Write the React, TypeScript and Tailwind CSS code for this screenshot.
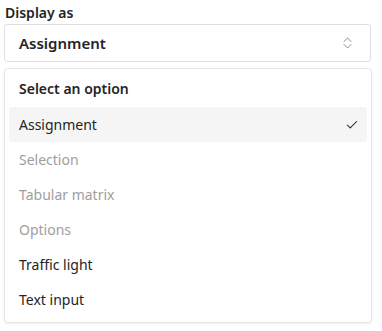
import { Check } from "lucide-react";

const options = [
  { label: "Assignment", selected: true },
  { label: "Selection", disabled: true },
  { label: "Tabular matrix", disabled: true },
  { label: "Options", disabled: true },
  { label: "Traffic light" },
  { label: "Text input" },
];

export default function App() {
  return (
    <div
      className="w-[382px] h-[331px] bg-white text-[#242424]"
      style={{ fontFamily: '"Segoe UI", "Noto Sans", sans-serif' }}
    >
      <div className="pl-[5px] pt-[3px] text-[14px] font-semibold leading-[20px] h-[24px]">Display as</div>

      <div className="ml-[4px] w-[367px] h-[38px] border border-[#e0e0e0] rounded-[3px] flex items-center justify-between pl-[14px] pr-[18px]">
        <span className="text-[15px] font-semibold">Assignment</span>
        <svg width="9" height="12" viewBox="0 0 9 12" fill="none" stroke="#8a8a8a" strokeWidth="1" strokeLinecap="round" strokeLinejoin="round">
          <path d="M1 4.5 L4.5 1 L8 4.5" />
          <path d="M1 7.5 L4.5 11 L8 7.5" />
        </svg>
      </div>

      <div className="ml-[4px] mt-[6px] w-[368px] h-[255px] border border-[#e5e5e5] rounded-[4px] shadow-[0_1px_3px_rgba(0,0,0,0.06)] px-[4px]">
        <div className="h-[38px] flex items-center pl-[10px] text-[14px] font-semibold">Select an option</div>
        {options.map((o) => (
          <div
            key={o.label}
            className={
              "h-[35px] flex items-center justify-between pl-[10px] pr-[8px] text-[14px] rounded-[3px] " +
              (o.selected ? "bg-[#f5f5f5] " : "") +
              (o.disabled ? "text-[#9e9e9e]" : "text-[#242424]")
            }
          >
            <span>{o.label}</span>
            {o.selected && <Check size={14} strokeWidth={1.8} />}
          </div>
        ))}
      </div>
    </div>
  );
}
